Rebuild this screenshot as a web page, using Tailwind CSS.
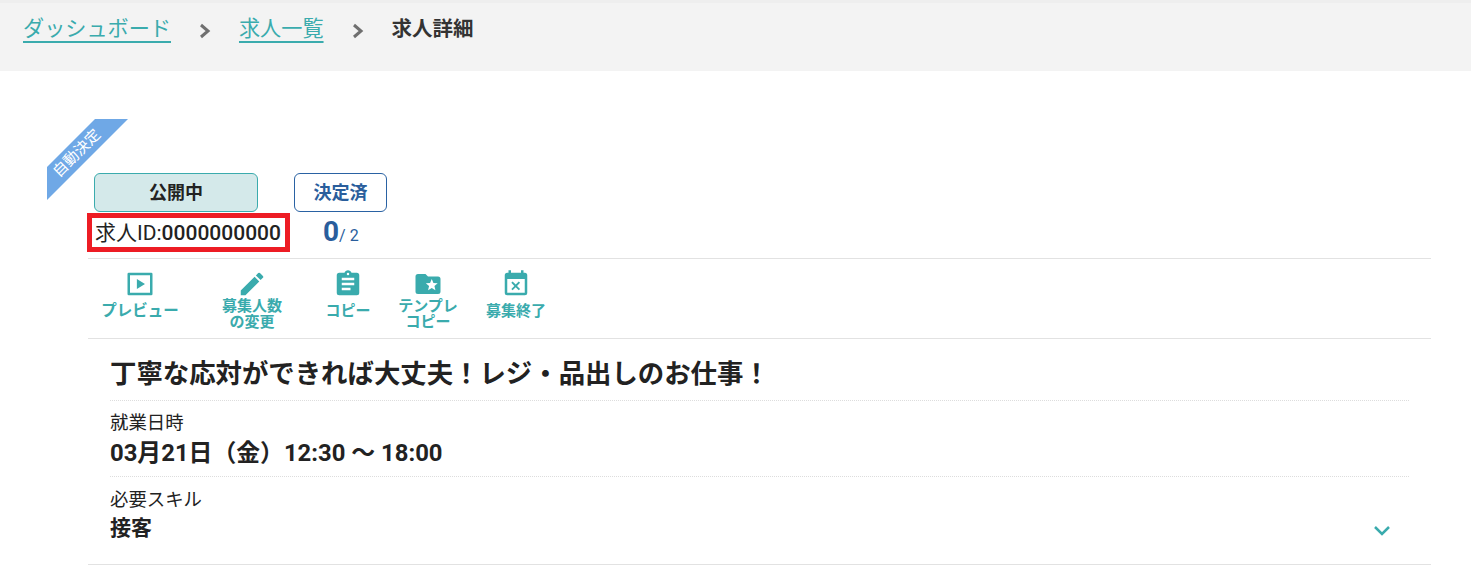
<!DOCTYPE html>
<html lang="ja">
<head>
<meta charset="UTF-8">
<script src="https://cdn.jsdelivr.net/npm/@tailwindcss/browser@4"></script>
<title>求人詳細</title>
</head>
<body class="bg-white text-[#222] font-['Roboto','Noto_Sans_CJK_JP',sans-serif] h-[565px] overflow-hidden">
  <!-- breadcrumb -->
  <nav class="h-[71px] bg-[#f3f3f3] border-t-[3px] border-[#eeeeee] pl-[23px] pt-[10px] flex items-start text-[21.150px] leading-[32px]">
    <a class="text-[#3aabad] underline decoration-2 underline-offset-[5px]">ダッシュボード</a>
    <svg class="w-[12px] h-[16px] ml-[28px] mr-[28px] mt-[10px]" viewBox="0 0 12 16"><path d="M2 2l7 6-7 6" fill="none" stroke="#6f6f6f" stroke-width="3"/></svg>
    <a class="text-[#3aabad] underline decoration-2 underline-offset-[5px]">求人一覧</a>
    <svg class="w-[12px] h-[16px] ml-[28px] mr-[28px] mt-[10px]" viewBox="0 0 12 16"><path d="M2 2l7 6-7 6" fill="none" stroke="#6f6f6f" stroke-width="3"/></svg>
    <span class="font-bold text-[#333] text-[20.500px]">求人詳細</span>
  </nav>

  <main class="relative pl-[88px] pr-[40px] pt-[102px]">
    <!-- ribbon -->
    <div class="absolute left-[47px] top-[48px] w-[81px] h-[81px] bg-[#6fa8e6] [clip-path:polygon(48px_0,81px_0,0_81px,0_48px)]"></div>
    <div class="absolute left-[47px] top-[48px] w-[81px] h-[81px] flex items-center justify-center">
      <span class="block -translate-x-[10px] -translate-y-[6px] -rotate-45 text-white text-[15px] leading-none whitespace-nowrap">自動決定</span>
    </div>

    <!-- status + id -->
    <div class="flex pl-[6px] gap-[36px]">
      <div class="w-[164px] h-[39px] rounded-[6px] border border-[#3aabad] bg-[#d4e9ea] flex items-center justify-center font-bold text-[18px]">公開中</div>
      <div class="w-[93px] h-[39px] rounded-[6px] border border-[#2a62a3] flex items-center justify-center font-bold text-[18px] text-[#2a5e9c]">決定済</div>
    </div>
    <div class="flex items-center h-[39px] mt-[1px]">
      <div class="w-[203px] h-[39px] -ml-[1px] border-[5px] border-[#ed1c24] flex items-center pl-[3px] pt-[2px] text-[21px] whitespace-nowrap">求人ID:<span class="font-medium">0000000000</span></div>
      <div class="ml-[33px] -mt-[2px] text-[#2a5e9c] flex items-baseline"><span class="text-[28px] font-bold leading-none">0</span><span class="text-[16px] leading-none">/ 2</span></div>
    </div>

    <!-- actions -->
    <div class="mt-[6px] border-t border-b border-[#e2e2e2] h-[81px] flex text-[#3aabad] font-bold text-[15px] leading-[16px] text-center">
      <div class="w-[104px] flex flex-col items-center pt-[10px]">
        <svg class="w-[30px] h-[30px]" viewBox="0 0 24 24" fill="#3aabad"><path d="M3 3h18a1 1 0 0 1 1 1v16a1 1 0 0 1-1 1H3a1 1 0 0 1-1-1V4a1 1 0 0 1 1-1zm1 2v14h16V5zM9.500 8l6.500 4-6.500 4z" fill-rule="evenodd"/></svg>
        <span class="mt-[4px] text-[15.500px]">プレビュー</span>
      </div>
      <div class="w-[120px] flex flex-col items-center pt-[10px]">
        <svg class="w-[30px] h-[30px]" viewBox="0 0 24 24" fill="#3aabad"><path d="M3 17.250V21h3.750L17.810 9.940l-3.750-3.750zM20.710 7.040a1 1 0 0 0 0-1.410l-2.340-2.340a1 1 0 0 0-1.410 0l-1.830 1.830 3.750 3.750z"/></svg>
        <span class="-mt-[1px]">募集人数<br>の変更</span>
      </div>
      <div class="w-[72px] flex flex-col items-center pt-[10px]">
        <svg class="w-[30px] h-[30px]" viewBox="0 0 24 24" fill="#3aabad"><path d="M19 3h-4.180C14.400 1.840 13.300 1 12 1s-2.400.840-2.820 2H5a2 2 0 0 0-2 2v14a2 2 0 0 0 2 2h14a2 2 0 0 0 2-2V5a2 2 0 0 0-2-2zm-7 0a1 1 0 1 1 0 2 1 1 0 0 1 0-2zm2 14H7v-2h7zm3-4H7v-2h10zm0-4H7V7h10z" fill-rule="evenodd"/></svg>
        <span class="mt-[4px]">コピー</span>
      </div>
      <div class="w-[88px] flex flex-col items-center pt-[10px]">
        <svg class="w-[30px] h-[30px]" viewBox="0 0 24 24" fill="#3aabad"><path d="M20 6h-8l-2-2H4a2 2 0 0 0-2 2v12a2 2 0 0 0 2 2h16a2 2 0 0 0 2-2V8a2 2 0 0 0-2-2zm-2.060 11L15 15.280 12.060 17l.780-3.330-2.590-2.240 3.410-.290L15 8l1.340 3.140 3.410.290-2.590 2.240z" fill-rule="evenodd"/></svg>
        <span class="-mt-[1px]">テンプレ<br>コピー</span>
      </div>
      <div class="w-[88px] flex flex-col items-center pt-[10px]">
        <svg class="w-[30px] h-[30px]" viewBox="0 0 24 24" fill="#3aabad"><path d="M19 3h-1V1h-2v2H8V1H6v2H5a2 2 0 0 0-2 2v14a2 2 0 0 0 2 2h14a2 2 0 0 0 2-2V5a2 2 0 0 0-2-2zm0 16H5V8h14zM9.310 17l2.440-2.440L14.190 17l1.060-1.060-2.440-2.440 2.440-2.440L14.190 10l-2.440 2.440L9.310 10l-1.060 1.060 2.440 2.440-2.440 2.440z" fill-rule="evenodd"/></svg>
        <span class="mt-[4px]">募集終了</span>
      </div>
    </div>

    <!-- detail -->
    <div class="relative px-[22px] border-b border-[#e2e2e2] h-[226px]">
      <h1 class="font-bold text-[26.400px] leading-[34px] pt-[18px] pb-[9px] h-[62px] border-b border-dotted border-[#dddddd] box-border whitespace-nowrap">丁寧な応対ができれば大丈夫！レジ・品出しのお仕事！</h1>
      <div class="h-[76px] border-b border-dotted border-[#dddddd] pt-[10px]">
        <div class="text-[18.400px] leading-[24px]">就業日時</div>
        <div class="font-bold text-[23.850px] leading-[32px] mt-[2px]">03月21日（金）12:30 ～ 18:00</div>
      </div>
      <div class="pt-[11px]">
        <div class="text-[18.400px] leading-[24px]">必要スキル</div>
        <div class="font-bold text-[21px] leading-[30px] mt-[1px]">接客</div>
      </div>
      <svg class="absolute right-[40px] top-[186px] w-[18px] h-[12px]" viewBox="0 0 18 12"><path d="M2 2l7 7 7-7" fill="none" stroke="#3aabad" stroke-width="2.500"/></svg>
    </div>
  </main>
</body>
</html>
